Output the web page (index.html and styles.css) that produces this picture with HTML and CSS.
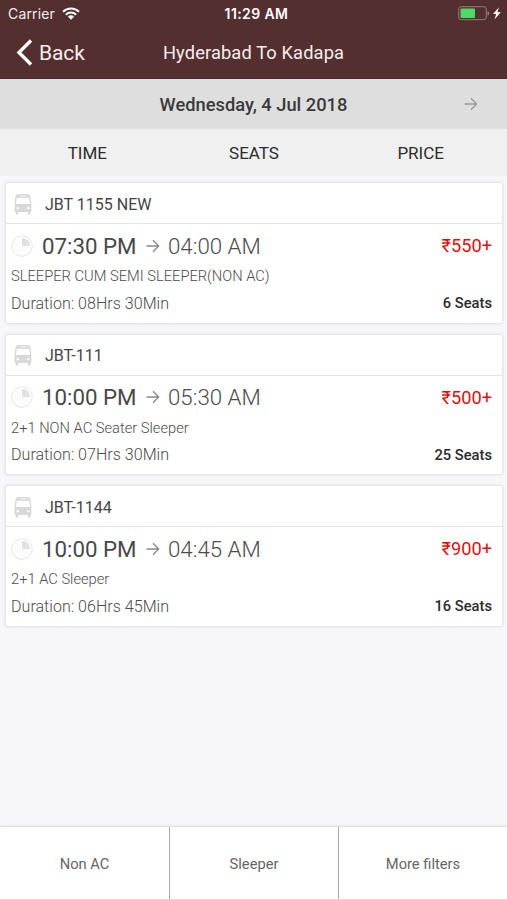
FILE: index.html
```html
<!DOCTYPE html>
<html lang="en">
<head>
<meta charset="utf-8">
<title>Hyderabad To Kadapa</title>
<link rel="stylesheet" href="styles.css">
</head>
<body>
<svg class="defs" width="0" height="0" aria-hidden="true">
  <symbol id="bus" viewBox="0 0 18 21">
    <path fill="#d8d8da" fill-rule="evenodd" d="M5 0h8q3 0 3.600 3l.8 7v7q0 1-1 1v1.500q0 1.200-1.300 1.200t-1.300-1.200V18H4.200v1.500q0 1.200-1.300 1.200t-1.300-1.200V18q-1 0-1-1v-7l.8-7Q2 0 5 0zM5.500 1.400v.9h7v-.9zM3.300 3.700q-.5 0-.6.600L2 9.200q-.1.900.7.900h12.600q.8 0 .7-.9l-.7-4.900q-.1-.6-.6-.6zM3.700 13a1.200 1.200 0 1 0 .01 0zM14.300 13a1.200 1.200 0 1 0 .01 0z"/>
  </symbol>
  <symbol id="clock" viewBox="0 0 22 22">
    <circle cx="11" cy="11" r="10.300" fill="#fcfcfc" stroke="#e6e6e6" stroke-width="1"/>
    <path fill="#e0e0e0" d="M11 3v8h8a8 8 0 0 0-8-8z"/>
  </symbol>
  <symbol id="arrow" viewBox="0 0 14 14">
    <path fill="none" stroke="currentColor" stroke-width="1.300" d="M.5 7h12M7 1.200 12.700 7 7 12.800"/>
  </symbol>
</svg>
<header class="top">
  <div class="status">
    <div class="carrier"><span>Carrier</span>
      <svg width="18" height="13" viewBox="0 0 18 13"><g fill="none" stroke="#fff" stroke-width="2"><path d="M1 4.700a11.300 11.300 0 0 1 16 0M3.900 7.700a7.200 7.200 0 0 1 10.200 0"/></g><path fill="#fff" d="M9 12.700 5.900 9.500a4.400 4.400 0 0 1 6.200 0z"/></svg>
    </div>
    <div class="clock">11:29 AM</div>
    <svg class="battery" width="44" height="15" viewBox="0 0 44 15"><rect x=".7" y=".7" width="27.600" height="13" rx="2.500" fill="none" stroke="#967b7b"/><path fill="#967b7b" d="M29.500 5q1.700.5 1.700 2.200t-1.700 2.200z"/><rect x="2.500" y="2.500" width="14.500" height="9.500" rx="1" fill="#4cd964"/><path fill="#fff" d="M41 1.200 35 8h3.200l-1.700 5.500 6.300-7.300h-3.500z"/></svg>
  </div>
  <nav class="nav">
    <a class="back"><svg width="17" height="27" viewBox="0 0 17 27"><path fill="none" stroke="#fff" stroke-width="3.400" d="M15 1.500 3 13.500l12 12"/></svg><span>Back</span></a>
    <h1>Hyderabad To Kadapa</h1>
  </nav>
</header>
<div class="date"><span>Wednesday, 4 Jul 2018</span><svg class="next" width="14" height="14"><use href="#arrow"/></svg></div>
<div class="sort"><span>TIME</span><span>SEATS</span><span>PRICE</span></div>
<main class="list">
  <article class="card">
    <h2><svg width="18" height="21"><use href="#bus"/></svg><span>JBT 1155 NEW</span></h2>
    <div class="times"><svg width="22" height="22"><use href="#clock"/></svg><b>07:30 PM</b><svg class="to" width="14" height="14"><use href="#arrow"/></svg><i>04:00 AM</i><strong>₹550+</strong></div>
    <p class="kind">SLEEPER CUM SEMI SLEEPER(NON AC)</p>
    <div class="foot"><span>Duration: 08Hrs 30Min</span><em>6 Seats</em></div>
  </article>
  <article class="card">
    <h2><svg width="18" height="21"><use href="#bus"/></svg><span>JBT-111</span></h2>
    <div class="times"><svg width="22" height="22"><use href="#clock"/></svg><b>10:00 PM</b><svg class="to" width="14" height="14"><use href="#arrow"/></svg><i>05:30 AM</i><strong>₹500+</strong></div>
    <p class="kind">2+1 NON AC Seater Sleeper</p>
    <div class="foot"><span>Duration: 07Hrs 30Min</span><em>25 Seats</em></div>
  </article>
  <article class="card">
    <h2><svg width="18" height="21"><use href="#bus"/></svg><span>JBT-1144</span></h2>
    <div class="times"><svg width="22" height="22"><use href="#clock"/></svg><b>10:00 PM</b><svg class="to" width="14" height="14"><use href="#arrow"/></svg><i>04:45 AM</i><strong>₹900+</strong></div>
    <p class="kind">2+1 AC Sleeper</p>
    <div class="foot"><span>Duration: 06Hrs 45Min</span><em>16 Seats</em></div>
  </article>
</main>
<footer class="filters"><span>Non AC</span><span>Sleeper</span><span>More filters</span></footer>
</body>
</html>
```
FILE: styles.css
```css
* { box-sizing: border-box; }
body {
  margin: 0;
  height: 900px;
  display: flex;
  flex-direction: column;
  overflow: hidden;
  background: #f7f7f9;
  font-family: Roboto, sans-serif;
}
svg { display: block; flex: none; }
.defs { position: absolute; }
.top { height: 79px; background: #532f30; color: #f8eeee; border-bottom: 1px solid #4b2829; }
.status {
  height: 27px;
  display: grid;
  grid-template-columns: 1fr auto 1fr;
  align-items: center;
  padding: 0 5px 0 8px;
  font-family: Inter, sans-serif;
  font-size: 14px;
}
.carrier { display: flex; align-items: center; gap: 7px; letter-spacing: .15px; }
.clock { font-weight: 600; font-size: 14px; letter-spacing: .4px; color: #fff; padding-left: 3px; }
.battery { justify-self: end; }
.nav { height: 51px; display: grid; grid-template-columns: 1fr auto 1fr; align-items: center; }
.back { display: flex; align-items: center; gap: 6px; padding-left: 16px; font-size: 21px; }
.back span { letter-spacing: -.1px; }
h1 { margin: 0; font-size: 18.300px; font-weight: 400; letter-spacing: .12px; }
.date {
  height: 50px;
  display: grid;
  grid-template-columns: 1fr auto 1fr;
  align-items: center;
  background: #dedede;
  color: #3a3a3a;
  font-size: 18.300px;
  font-weight: 500;
}
.date span { grid-column: 2; }
.next { color: #999; justify-self: end; margin-right: 29px; }
.sort {
  height: 47px;
  display: grid;
  grid-template-columns: repeat(3, 1fr);
  align-items: center;
  text-align: center;
  background: #f0f0f1;
  color: #2c2c2c;
  font-size: 17px;
  padding: 0 3px 0 4px;
}
.list { flex: 1; padding: 7px 5px 0 6px; display: flex; flex-direction: column; gap: 12px; }
.card {
  height: 139.500px;
  background: #fff;
  border-radius: 2px;
  box-shadow: 0 0 3px 1px #dedee2;
}
h2 {
  margin: 0;
  height: 41px;
  padding: 2px 8px 0;
  display: flex;
  align-items: center;
  gap: 13px;
  border-bottom: 1px solid #e5e5e7;
  color: #444;
  font-size: 16px;
  font-weight: 400;
}
.times { height: 44px; padding: 0 10px 1px 5px; display: flex; align-items: center; font-size: 22.300px; white-space: nowrap; }
.times b { width: 94px; margin-left: 9px; font-weight: 400; color: #484848; }
.to { margin: 0 8px 0 10px; color: #888; }
.times i { font-style: normal; font-weight: 300; color: #4c4c4c; }
.times strong { margin-left: auto; font-size: 18.200px; font-weight: 400; color: #e01010; }
.kind { margin: 0; height: 17px; line-height: 17px; padding-left: 5px; font-size: 14.700px; font-weight: 300; color: #4c4c4c; }
.foot { height: 36px; padding: 0 10px 0 5px; display: flex; align-items: center; justify-content: space-between; font-size: 16.100px; font-weight: 300; color: #4c4c4c; }
.foot em { font-style: normal; font-size: 14.700px; font-weight: 500; color: #2b2b2b; }
.filters {
  height: 74px;
  display: grid;
  grid-template-columns: repeat(3, 1fr);
  background: #fff;
  border-top: 1px solid #e1e1e2;
  border-bottom: 1px solid #dcdad9;
  box-shadow: 0 0 2px #ddd;
  color: #666;
  font-size: 14.700px;
}
.filters span { display: flex; align-items: center; justify-content: center; padding-top: 2px; }
.filters span + span { border-left: 1px solid #aaaaac; }
```
